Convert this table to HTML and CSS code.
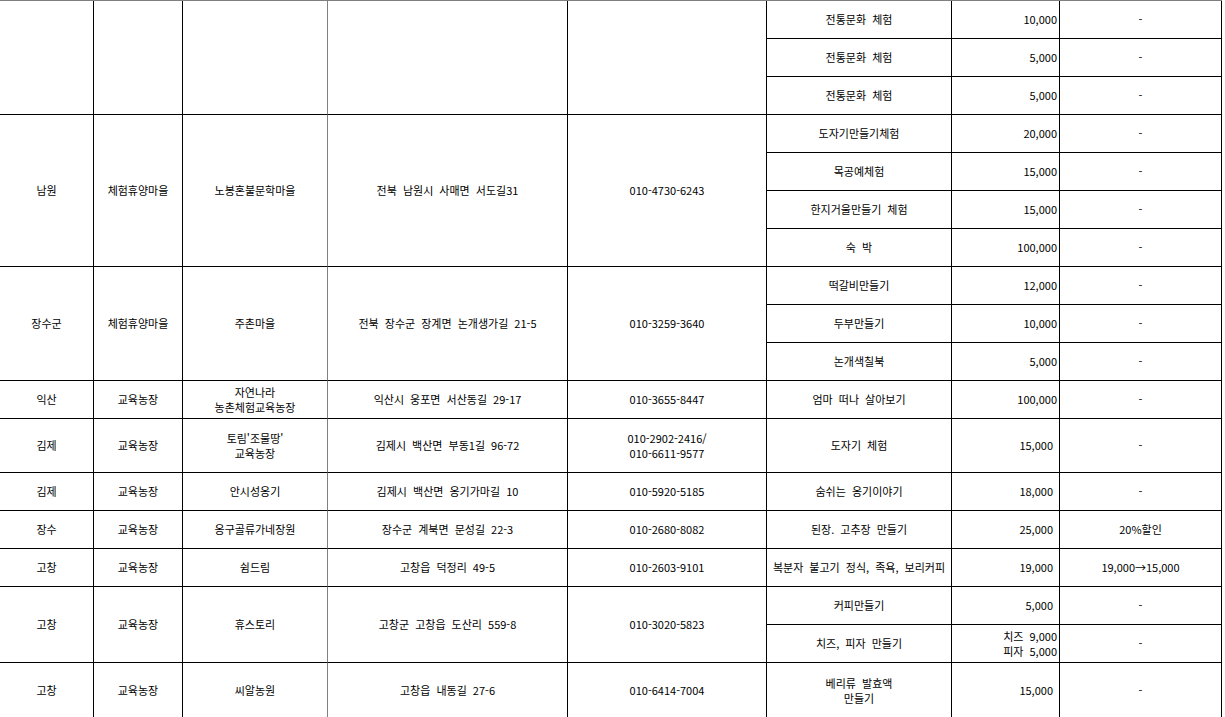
FILE: index.html
```html
<!DOCTYPE html>
<html lang="ko">
<head>
<meta charset="utf-8">
<title>체험 프로그램</title>
<link rel="stylesheet" href="styles.css">
</head>
<body>
<table class="sheet">
  <colgroup>
    <col class="w-region"><col class="w-type"><col class="w-name"><col class="w-addr"><col class="w-tel"><col class="w-prog"><col class="w-price"><col class="w-disc">
  </colgroup>
  <tbody>
    <tr class="h38">
      <td rowspan="3"></td><td rowspan="3"></td><td rowspan="3" class="name"></td><td rowspan="3"></td><td rowspan="3"></td>
      <td>전통문화 체험</td><td class="price">10,000</td><td>-</td>
    </tr>
    <tr class="h38"><td>전통문화 체험</td><td class="price">5,000</td><td>-</td></tr>
    <tr class="h38"><td>전통문화 체험</td><td class="price">5,000</td><td>-</td></tr>

    <tr class="h38">
      <td rowspan="4">남원</td><td rowspan="4">체험휴양마을</td><td rowspan="4" class="name">노봉혼불문학마을</td><td rowspan="4">전북 남원시 사매면 서도길31</td><td rowspan="4">010-4730-6243</td>
      <td>도자기만들기체험</td><td class="price">20,000</td><td>-</td>
    </tr>
    <tr class="h38"><td>목공예체험</td><td class="price">15,000</td><td>-</td></tr>
    <tr class="h38"><td>한지거울만들기 체험</td><td class="price">15,000</td><td>-</td></tr>
    <tr class="h38"><td>숙 박</td><td class="price">100,000</td><td>-</td></tr>

    <tr class="h38">
      <td rowspan="3">장수군</td><td rowspan="3">체험휴양마을</td><td rowspan="3" class="name">주촌마을</td><td rowspan="3">전북 장수군 장계면 논개생가길 21-5</td><td rowspan="3">010-3259-3640</td>
      <td>떡갈비만들기</td><td class="price">12,000</td><td>-</td>
    </tr>
    <tr class="h38"><td>두부만들기</td><td class="price">10,000</td><td>-</td></tr>
    <tr class="h38"><td>논개색칠북</td><td class="price">5,000</td><td>-</td></tr>

    <tr class="h38">
      <td>익산</td><td>교육농장</td><td class="name">자연나라<br>농촌체험교육농장</td><td>익산시 웅포면 서산동길 29-17</td><td>010-3655-8447</td>
      <td>엄마 떠나 살아보기</td><td class="price">100,000</td><td>-</td>
    </tr>
    <tr class="h54">
      <td>김제</td><td>교육농장</td><td class="name">토림'조물땅'<br>교육농장</td><td>김제시 백산면 부동1길 96-72</td><td>010-2902-2416/<br>010-6611-9577</td>
      <td>도자기 체험</td><td class="price wide">15,000</td><td>-</td>
    </tr>
    <tr class="h38">
      <td>김제</td><td>교육농장</td><td class="name">안시성옹기</td><td>김제시 백산면 옹기가마길 10</td><td>010-5920-5185</td>
      <td>숨쉬는 옹기이야기</td><td class="price wide">18,000</td><td>-</td>
    </tr>
    <tr class="h38">
      <td>장수</td><td>교육농장</td><td class="name">옹구골류가네장원</td><td>장수군 계북면 문성길 22-3</td><td>010-2680-8082</td>
      <td>된장. 고추장 만들기</td><td class="price wide">25,000</td><td>20%할인</td>
    </tr>
    <tr class="h38">
      <td>고창</td><td>교육농장</td><td class="name">쉼드림</td><td>고창읍 덕정리 49-5</td><td>010-2603-9101</td>
      <td>복분자 불고기 정식, 족욕, 보리커피</td><td class="price wide">19,000</td><td>19,000→15,000</td>
    </tr>
    <tr class="h38">
      <td rowspan="2">고창</td><td rowspan="2">교육농장</td><td rowspan="2" class="name">휴스토리</td><td rowspan="2">고창군 고창읍 도산리 559-8</td><td rowspan="2">010-3020-5823</td>
      <td>커피만들기</td><td class="price wide">5,000</td><td>-</td>
    </tr>
    <tr class="h38"><td>치즈, 피자 만들기</td><td class="price">치즈 9,000<br>피자 5,000</td><td>-</td></tr>
    <tr class="h56">
      <td>고창</td><td>교육농장</td><td class="name">씨알농원</td><td>고창읍 내동길 27-6</td><td>010-6414-7004</td>
      <td>베리류 발효액<br>만들기</td><td class="price wide">15,000</td><td>-</td>
    </tr>
  </tbody>
</table>
</body>
</html>
```

FILE: styles.css
```css
html, body {
  margin: 0;
  padding: 0;
  background: #ffffff;
}

.sheet {
  table-layout: fixed;
  border-collapse: separate;
  border-spacing: 0;
  width: 1222px;
  border-top: 1px solid #7f7f7f;
  font-family: "Noto Sans CJK KR", "Noto Sans", sans-serif;
  font-size: 11px;
  line-height: 14.5px;
  word-spacing: 3px;
  color: #000000;
}

.w-region { width: 94px; }
.w-type { width: 89px; }
.w-name { width: 145px; }
.w-addr { width: 240px; }
.w-tel { width: 199px; }
.w-prog { width: 185px; }
.w-price { width: 108px; }
.w-disc { width: 162px; }

.sheet td {
  box-sizing: border-box;
  border-right: 1px solid #000000;
  border-bottom: 1px solid #000000;
  padding: 0 1px;
  text-align: center;
  vertical-align: middle;
  white-space: nowrap;
  overflow: hidden;
}

.sheet td.name {
  border-right-color: #808080;
}

.sheet td.price {
  text-align: right;
  padding-right: 2px;
}

.sheet td.price.wide {
  padding-right: 6px;
}

.h38 { height: 38px; }
.h54 { height: 54px; }
.h56 { height: 56px; }
```
